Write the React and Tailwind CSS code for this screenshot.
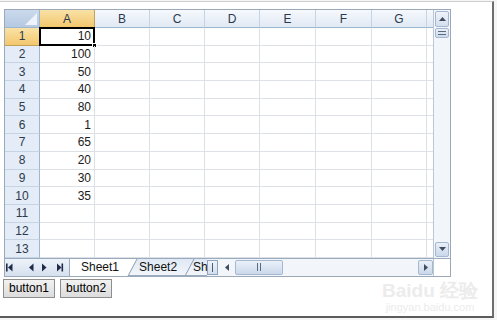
import React from 'react'

const values = ['10', '100', '50', '40', '80', '1', '65', '20', '30', '35', '', '', '']

// column header widths, written out so Tailwind sees them
const cols = [
  { label: 'A', w: 'w-[55px]' },
  { label: 'B', w: 'w-[55px]' },
  { label: 'C', w: 'w-[55px]' },
  { label: 'D', w: 'w-[55px]' },
  { label: 'E', w: 'w-[56px]' },
  { label: 'F', w: 'w-[56px]' },
  { label: 'G', w: 'w-[55px]' },
]

function Corner() {
  return (
    <div className="w-[35px] h-full shrink-0 bg-gradient-to-b from-[#cbdaec] to-[#b5c9e2] border-r border-b border-[#9eb6ce]">
      <svg width="35" height="18" viewBox="0 0 35 18" aria-hidden="true">
        <polygon points="32,3 32,15 20,15" fill="#eef3fa" />
      </svg>
    </div>
  )
}

function ColHeader({ label, w, active }) {
  return (
    <div
      className={`${w} shrink-0 h-full flex items-center justify-center border-r border-b ${
        active
          ? 'bg-gradient-to-b from-[#f9e2a6] to-[#f3c76c] border-[#c2a25a] border-b-[#c2a25a]'
          : 'bg-gradient-to-b from-[#f6f9fd] to-[#e1e9f4] border-[#c5d3e3] border-b-[#9eb6ce]'
      }`}
    >
      {label}
    </div>
  )
}

function Row({ n, value }) {
  const active = n === 1
  return (
    <div className="flex h-[17.7px]">
      <div
        className={`w-[35px] shrink-0 flex items-center justify-center border-r border-b ${
          active
            ? 'bg-gradient-to-b from-[#f9e2a6] to-[#f3c76c] border-[#c2a25a]'
            : 'bg-[#e4ecf7] border-[#c5d3e3] border-r-[#9eb6ce]'
        }`}
      >
        {n}
      </div>
      <div className="relative w-[55px] shrink-0 flex items-center justify-end pr-[3px] border-r border-b border-[#dde1e6] text-[#1b1b1b]">
        {value}
        {active && (
          <>
            <div className="absolute -left-px -top-px -right-px -bottom-px border-2 border-black" />
            <div className="absolute -right-[3px] -bottom-[3px] w-[5px] h-[5px] bg-black border border-white" />
          </>
        )}
      </div>
      {cols.slice(1).map((c) => (
        <div key={c.label} className={`${c.w} shrink-0 border-r border-b border-[#dde1e6]`} />
      ))}
      <div className="flex-1 border-b border-[#dde1e6]" />
    </div>
  )
}

function VScroll() {
  return (
    <div className="w-[17px] shrink-0 flex flex-col bg-[#f2f5fa] border-l border-[#b9c6d6] pl-[1px] pr-[1px] pt-[1px] pb-[1px]">
      <div className="h-[16px] flex items-center justify-center rounded-[2px] border border-[#a6b8cf] bg-gradient-to-b from-[#eef3fa] to-[#d3dfee]">
        <svg width="7" height="4" viewBox="0 0 7 4" aria-hidden="true">
          <polygon points="0,4 3.5,0 7,4" fill="#3f4d60" />
        </svg>
      </div>
      <div className="h-[10px] mt-[1px] flex items-center justify-center rounded-[2px] border border-[#a6b8cf] bg-gradient-to-b from-[#e9f0f9] to-[#ccd9ea]">
        <svg width="8" height="4" viewBox="0 0 8 4" aria-hidden="true">
          <rect x="0" y="0" width="8" height="1" fill="#5a6a80" />
          <rect x="0" y="3" width="8" height="1" fill="#5a6a80" />
        </svg>
      </div>
      <div className="flex-1" />
      <div className="h-[15px] flex items-center justify-center rounded-[2px] border border-[#a6b8cf] bg-gradient-to-b from-[#e9f0f9] to-[#cad8ea]">
        <svg width="7" height="4" viewBox="0 0 7 4" aria-hidden="true">
          <polygon points="0,0 3.5,4 7,0" fill="#3f4d60" />
        </svg>
      </div>
    </div>
  )
}

function SheetNav() {
  return (
    <div className="w-[65px] shrink-0 h-full border-r border-[#9aabbf] bg-gradient-to-b from-[#eef3fa] to-[#d5e0ee]">
      <svg width="65" height="17" viewBox="0 0 65 17" aria-hidden="true">
        <rect x="1" y="4.5" width="1.6" height="8" fill="#1e2c4a" />
        <polygon points="7.5,4.5 3,8.5 7.5,12.5" fill="#1e2c4a" />
        <polygon points="28.5,4.5 24,8.5 28.5,12.5" fill="#1e2c4a" />
        <polygon points="37,4.5 41.5,8.5 37,12.5" fill="#1e2c4a" />
        <polygon points="52,4.5 56.5,8.5 52,12.5" fill="#1e2c4a" />
        <rect x="56.5" y="4.5" width="1.6" height="8" fill="#1e2c4a" />
      </svg>
    </div>
  )
}

function SheetTabs() {
  return (
    <div className="relative w-[137px] shrink-0 h-full overflow-hidden">
      <svg className="absolute inset-0" width="137" height="17" viewBox="0 0 137 17" aria-hidden="true">
        <defs>
          <linearGradient id="tabg" x1="0" y1="0" x2="0" y2="1">
            <stop offset="0" stopColor="#dfe8f4" />
            <stop offset="1" stopColor="#f3f7fc" />
          </linearGradient>
        </defs>
        <polygon points="58,17 67,0 124,0 115,17" fill="url(#tabg)" />
        <polygon points="115,17 124,0 137,0 137,17" fill="url(#tabg)" />
        <polygon points="0,0 67,0 58,17 0,17" fill="#ffffff" />
        <line x1="58" y1="17" x2="67" y2="0" stroke="#8c9db4" strokeWidth="1" />
        <line x1="115" y1="17" x2="124" y2="0" stroke="#8c9db4" strokeWidth="1" />
        <line x1="58" y1="16.5" x2="137" y2="16.5" stroke="#9aabbf" strokeWidth="1" />
      </svg>
      <div className="relative flex items-center h-full whitespace-nowrap text-[#111]">
        <span className="ml-[11px]">Sheet1</span>
        <span className="ml-[20px]">Sheet2</span>
        <span className="ml-[16px]">Sh</span>
      </div>
    </div>
  )
}

function HScroll() {
  return (
    <div className="flex-1 h-full flex items-stretch bg-[#f2f5fa] py-[1px]">
      <div className="w-[11px] shrink-0 flex items-center justify-center border border-[#8fa3bc] bg-gradient-to-b from-[#eef3fa] to-[#d3dfee]">
        <div className="w-px h-[9px] bg-[#4c5c72]" />
      </div>
      <div className="w-[17px] shrink-0 flex items-center justify-center">
        <svg width="4" height="7" viewBox="0 0 4 7" aria-hidden="true">
          <polygon points="4,0 0,3.5 4,7" fill="#3f4d60" />
        </svg>
      </div>
      <div className="w-[48px] shrink-0 flex items-center justify-center rounded-[2px] border border-[#a6b8cf] bg-gradient-to-b from-[#e9f0f9] to-[#ccd9ea]">
        <svg width="4" height="8" viewBox="0 0 4 8" aria-hidden="true">
          <rect x="0" y="0" width="1" height="8" fill="#5a6a80" />
          <rect x="3" y="0" width="1" height="8" fill="#5a6a80" />
        </svg>
      </div>
      <div className="flex-1" />
      <div className="w-[15px] shrink-0 flex items-center justify-center rounded-[2px] border border-[#a6b8cf] bg-gradient-to-b from-[#e9f0f9] to-[#cad8ea]">
        <svg width="4" height="7" viewBox="0 0 4 7" aria-hidden="true">
          <polygon points="0,0 4,3.5 0,7" fill="#3f4d60" />
        </svg>
      </div>
    </div>
  )
}

function Button({ children }) {
  return (
    <button className="h-[19px] px-[5px] border border-[#8e8e8e] bg-gradient-to-b from-[#f2f2f2] to-[#dcdcdc] text-[12px] leading-none text-black">
      {children}
    </button>
  )
}

export default function App() {
  return (
    <div className="w-[497px] h-[320px] bg-[#f5f5f5] overflow-hidden font-['Liberation_Sans',Arial,sans-serif] text-[12px]">
      <div className="relative w-[494px] h-[317px] mt-px bg-white border-t border-[#cfcfcf] border-r-2 border-r-[#6e6e6e] border-b-2 border-b-[#5c5c5c] pl-[4px] pt-[7px]">
        {/* Spreadsheet */}
        <div className="w-[447px] border border-[#9aa8b8] flex flex-col">
          <div className="flex">
            <div className="flex-1 flex flex-col text-[#2c3a4d]">
              <div className="flex h-[18px]">
                <Corner />
                {cols.map((c) => (
                  <ColHeader key={c.label} label={c.label} w={c.w} active={c.label === 'A'} />
                ))}
                <div className="flex-1 border-b border-[#9eb6ce] bg-gradient-to-b from-[#f6f9fd] to-[#e1e9f4]" />
              </div>
              {values.map((v, i) => (
                <Row key={i} n={i + 1} value={v} />
              ))}
            </div>
            <VScroll />
          </div>
          <div className="flex h-[18px] border-t border-[#9aabbf]">
            <SheetNav />
            <SheetTabs />
            <HScroll />
            <div className="w-[17px] shrink-0 bg-white border-l border-[#b9c6d6]" />
          </div>
        </div>

        {/* Buttons */}
        <div className="flex gap-[5px] mt-[2px] -ml-px">
          <Button>button1</Button>
          <Button>button2</Button>
        </div>

        {/* Watermark */}
        <div className="absolute left-[382px] top-[279px] flex flex-col items-center text-[#ececec] pointer-events-none">
          <span className="text-[19px] leading-[20px] font-bold">Baidu 经验</span>
          <span className="text-[11px] leading-[12px]">jingyan.baidu.com</span>
        </div>
      </div>
    </div>
  )
}
